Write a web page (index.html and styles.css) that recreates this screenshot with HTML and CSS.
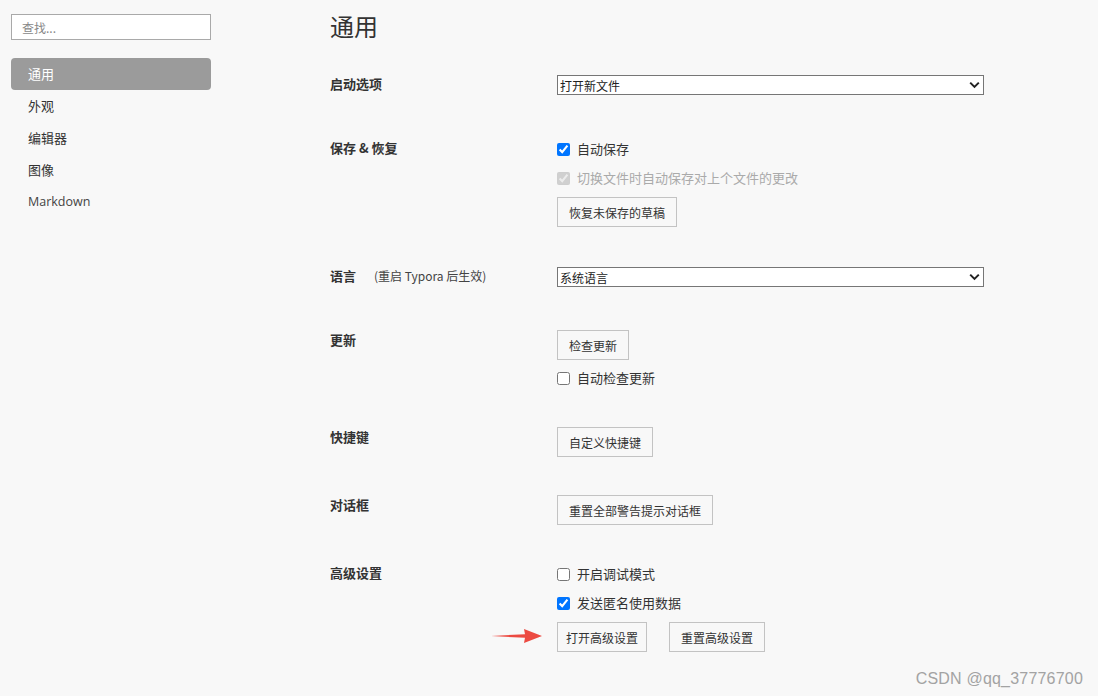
FILE: index.html
```html
<!DOCTYPE html>
<html lang="zh">
<head>
<meta charset="utf-8">
<title>偏好设置</title>
<link rel="stylesheet" href="styles.css">
</head>
<body>
<div class="app">
  <aside class="sidebar">
    <input class="search" type="text" placeholder="查找...">
    <nav class="nav">
      <div class="nav-item active">通用</div>
      <div class="nav-item">外观</div>
      <div class="nav-item">编辑器</div>
      <div class="nav-item">图像</div>
      <div class="nav-item latin">Markdown</div>
    </nav>
  </aside>
  <main class="main">
    <h1 class="title">通用</h1>

    <section class="row row-first">
      <div class="label">启动选项</div>
      <div class="controls">
        <div class="select"><span>打开新文件</span><svg width="11" height="8" viewBox="0 0 11 8"><path d="M1.2 1.6 L5.5 5.9 L9.8 1.6" fill="none" stroke="#222" stroke-width="2"/></svg></div>
      </div>
    </section>

    <section class="row row-save">
      <div class="label">保存 &amp; 恢复</div>
      <div class="controls">
        <label class="check"><input type="checkbox" checked><span>自动保存</span></label>
        <label class="check disabled"><input type="checkbox" checked disabled><span>切换文件时自动保存对上个文件的更改</span></label>
        <div class="btns"><button class="btn">恢复未保存的草稿</button></div>
      </div>
    </section>

    <section class="row row-lang">
      <div class="label">语言 <span class="hint">(重启 Typora 后生效)</span></div>
      <div class="controls">
        <div class="select"><span>系统语言</span><svg width="11" height="8" viewBox="0 0 11 8"><path d="M1.2 1.6 L5.5 5.9 L9.8 1.6" fill="none" stroke="#222" stroke-width="2"/></svg></div>
      </div>
    </section>

    <section class="row row-update">
      <div class="label">更新</div>
      <div class="controls">
        <div><button class="btn">检查更新</button></div>
        <label class="check after-btn"><input type="checkbox"><span>自动检查更新</span></label>
      </div>
    </section>

    <section class="row row-keys">
      <div class="label">快捷键</div>
      <div class="controls">
        <div><button class="btn">自定义快捷键</button></div>
      </div>
    </section>

    <section class="row row-dialog">
      <div class="label">对话框</div>
      <div class="controls">
        <div><button class="btn">重置全部警告提示对话框</button></div>
      </div>
    </section>

    <section class="row row-adv">
      <div class="label">高级设置</div>
      <div class="controls">
        <label class="check"><input type="checkbox"><span>开启调试模式</span></label>
        <label class="check"><input type="checkbox" checked><span>发送匿名使用数据</span></label>
        <div class="btns">
          <button class="btn btn-narrow">打开高级设置</button>
          <button class="btn">重置高级设置</button>
        </div>
      </div>
    </section>
  </main>
</div>

<svg class="arrow" width="54" height="16" viewBox="0 0 54 16">
  <path d="M0 8 L34 6.2 L33 1 L51 8 L33 15 L34 9.8 Z" fill="#ec4a41"/>
</svg>
<div class="watermark">CSDN @qq_37776700</div>
</body>
</html>
```

FILE: styles.css
```css
html, body {
  margin: 0;
  padding: 0;
  background: #f8f8f8;
}

body {
  font-family: "Noto Sans CJK SC", "Noto Sans", sans-serif;
  color: #333;
  font-size: 13px;
  width: 1098px;
  height: 696px;
  overflow: hidden;
  position: relative;
}

.app {
  display: flex;
}

.sidebar {
  width: 200px;
  padding: 14px 0 0 11px;
  flex: none;
}

.search {
  box-sizing: border-box;
  display: block;
  width: 200px;
  height: 26px;
  border: 1px solid #a9a9a9;
  background: #fff;
  padding: 0 10px;
  font-family: inherit;
  font-size: 12px;
  color: #333;
  outline: none;
}

.search::placeholder {
  color: #888;
}

.nav {
  margin-top: 18px;
  display: flex;
  flex-direction: column;
}

.nav-item {
  height: 32px;
  line-height: 31px;
  padding-left: 17px;
  font-size: 13px;
  color: #333;
  border-radius: 4px;
}

.nav-item.latin {
  font-family: "Open Sans", "Noto Sans CJK SC", sans-serif;
  font-size: 12.5px;
  color: #444;
}

.nav-item.active {
  background: #9b9b9b;
  color: #fff;
}

.main {
  padding: 12px 0 0 119px;
  flex: 1;
}

.title {
  margin: 0;
  font-size: 24px;
  line-height: 28px;
  font-weight: 400;
  color: #333;
}

.row {
  display: grid;
  grid-template-columns: 227px 427px;
  margin-top: 40px;
}

.row-first { margin-top: 35px; }
.row-save { margin-top: 44px; }
.row-lang { margin-top: 40px; }
.row-update { margin-top: 43px; }
.row-keys { margin-top: 39px; }
.row-dialog { margin-top: 38px; }
.row-adv { margin-top: 39px; }

.label {
  font-size: 13px;
  line-height: 20px;
  font-weight: 700;
  color: #333;
  white-space: nowrap;
}

.row-save .label { margin-top: -1px; }
.row-first .label { margin-top: -1px; }
.row-lang .label { margin-top: -1px; }
.row-adv .label { margin-top: -1px; }

.hint {
  font-weight: 400;
  font-size: 12px;
  margin-left: 15px;
  color: #444;
}

.controls {
  display: flex;
  flex-direction: column;
  align-items: flex-start;
}

.select {
  box-sizing: border-box;
  width: 427px;
  height: 20px;
  border: 1px solid #767676;
  background: #fff;
  display: flex;
  align-items: center;
  justify-content: space-between;
  padding: 0 3px 0 2px;
  font-size: 12px;
  color: #222;
}

.check {
  display: flex;
  align-items: center;
  gap: 7px;
  height: 20px;
  line-height: 19px;
  font-size: 13px;
  color: #333;
}

.check span {
  margin-top: -1px;
}

.check + .check {
  margin-top: 9px;
}

.check input {
  margin: 0;
  width: 13px;
  height: 13px;
}

.check.disabled {
  color: #aaa;
}

.after-btn {
  margin-top: 8px;
}

.btns {
  display: flex;
  gap: 22px;
  margin-top: 9px;
}

.btn {
  box-sizing: border-box;
  height: 30px;
  padding: 0 11px;
  border: 1px solid #c3c3c3;
  background: #f8f8f8;
  font-family: inherit;
  font-size: 12px;
  color: #333;
  border-radius: 0;
  cursor: pointer;
}

.btn-narrow {
  padding: 0 8px;
}

.arrow {
  position: absolute;
  left: 491px;
  top: 628px;
}

.watermark {
  position: absolute;
  right: 15px;
  bottom: 8px;
  font-family: "Liberation Sans", Arial, sans-serif;
  font-size: 16px;
  color: #a3a3a3;
  letter-spacing: 0.2px;
}
```
